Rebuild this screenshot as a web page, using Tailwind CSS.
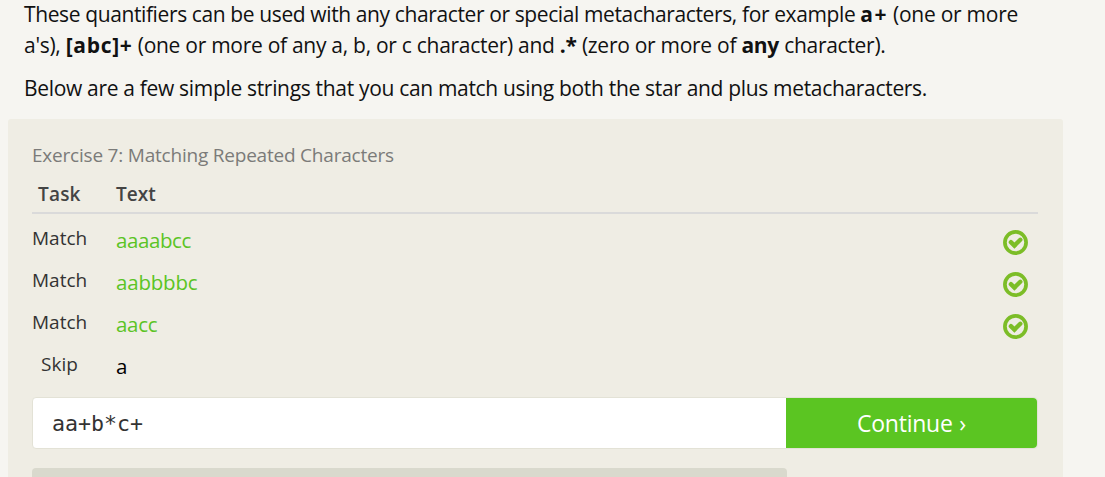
<!DOCTYPE html>
<html lang="en">
<head>
<meta charset="utf-8">
<title>Matching Repeated Characters</title>
<script src="https://cdn.jsdelivr.net/npm/@tailwindcss/browser@4"></script>
</head>
<body class="h-[477px] overflow-hidden bg-[#f6f5f1] font-['Open_Sans',sans-serif] text-[#111]">
<svg class="hidden">
  <symbol id="check" viewBox="0 0 25 25">
    <circle cx="12.5" cy="12.5" r="10.6" fill="none" stroke="#7cbd27" stroke-width="3.7"/>
    <path d="M7.9 12.2 11.4 15.6 17.3 9.8" fill="none" stroke="#7cbd27" stroke-width="4.4" stroke-linecap="round"/>
  </symbol>
</svg>
<main class="-mt-px w-[1063px] pl-2">
  <div class="pl-4 text-[21px] leading-[31px] whitespace-nowrap">
    <p class="tracking-[-0.385px]">These quantifiers can be used with any character or special metacharacters, for example <b class="tracking-[1.4px]">a+</b> <span class="tracking-[-0.25px]">(one or more</span></p>
    <p class="tracking-[-0.28px]">a's), <b class="tracking-[0.7px]">[abc]+</b> (one or more of any a, b, or c character) and <b>.*</b> (zero or more of <b>any</b> character).</p>
    <p class="mt-3 tracking-[-0.32px]">Below are a few simple strings that you can match using both the star and plus metacharacters.</p>
  </div>
  <section class="mt-[15px] h-[358px] overflow-hidden rounded-t-[3px] bg-[#efede4] pt-[23px] pl-6 pr-[25px] text-[19px] leading-[26px]">
    <h2 class="tracking-[-0.21px] text-[#7b7b79]">Exercise 7: Matching Repeated Characters</h2>
    <div class="mt-[13px] flex h-[33px] border-b-2 border-[#dadada] font-semibold text-[#444]">
      <div class="w-[84px] pl-[6px] tracking-[0.2px]">Task</div>
      <div>Text</div>
    </div>
    <div class="mt-[7px] text-[#333]">
      <div class="flex h-[42px]">
        <div class="w-[55px] pt-1 text-center">Match</div>
        <div class="ml-[29px] flex-1 pt-[5px] text-[20.5px] leading-7 tracking-[-0.4px] text-[#5bc424]">aaaabcc</div>
        <svg class="mt-[9px] mr-[10px] size-[25px]"><use href="#check"/></svg>
      </div>
      <div class="flex h-[42px]">
        <div class="w-[55px] pt-1 text-center">Match</div>
        <div class="ml-[29px] flex-1 pt-[5px] text-[20.5px] leading-7 tracking-[-0.2px] text-[#5bc424]">aabbbbc</div>
        <svg class="mt-[9px] mr-[10px] size-[25px]"><use href="#check"/></svg>
      </div>
      <div class="flex h-[42px]">
        <div class="w-[55px] pt-1 text-center">Match</div>
        <div class="ml-[29px] flex-1 pt-[5px] text-[20.5px] leading-7 tracking-[-0.3px] text-[#5bc424]">aacc</div>
        <svg class="mt-[9px] mr-[10px] size-[25px]"><use href="#check"/></svg>
      </div>
      <div class="flex h-[42px]">
        <div class="w-[55px] pt-1 text-center">Skip</div>
        <div class="ml-[29px] flex-1 pt-[5px] text-[20.5px] leading-7 text-black">a</div>
      </div>
    </div>
    <div class="mt-2 flex h-[52px] w-[1006px] rounded border border-[#e3e2d6] bg-white">
      <div class="w-[753px] pl-[19px] font-['DejaVu_Sans_Mono',monospace] text-[21.6px] leading-[52px] text-[#333]">aa+b*c+</div>
      <div class="w-[251px] rounded-r bg-[#5bc522] pl-[71px] text-[23px] leading-[51px] tracking-[-0.25px] text-white">Continue<span class="ml-px"> ›</span></div>
    </div>
    <div class="mt-[19px] h-[9px] w-[755px] rounded-t bg-[#d9d9cd]"></div>
  </section>
</main>
</body>
</html>
